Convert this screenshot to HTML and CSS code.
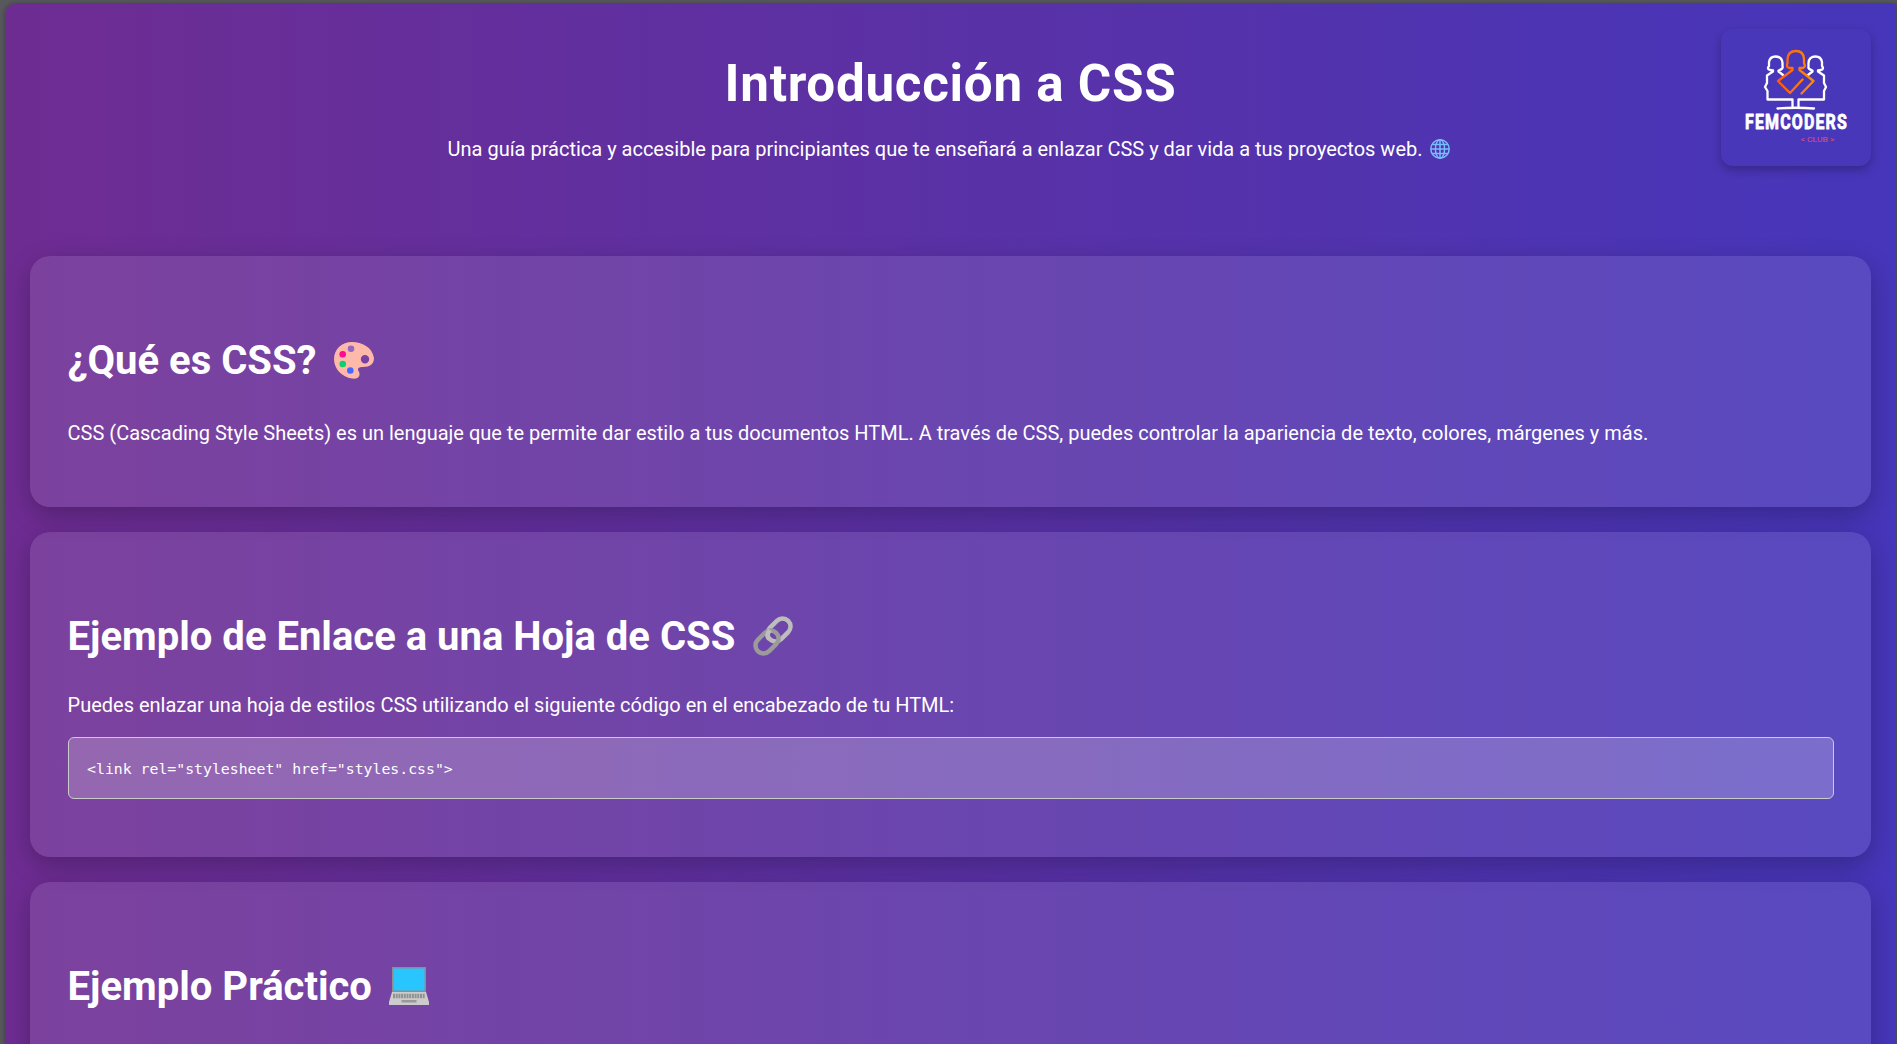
FILE: index.html
```html
<!DOCTYPE html>
<html lang="es">
<head>
<meta charset="utf-8">
<title>Introducción a CSS</title>
<link rel="stylesheet" href="styles.css">
</head>
<body>
<div class="page">
  <header class="header">
    <h1 class="title">Introducción a CSS</h1>
    <p class="lead">Una guía práctica y accesible para principiantes que te enseñará a enlazar CSS y dar vida a tus proyectos web.
      <svg class="globe" viewBox="0 0 20 20" fill="none" stroke="#78bdfb" stroke-width="1.5"><circle cx="10" cy="10" r="9.2"/><ellipse cx="10" cy="10" rx="4.6" ry="9.2"/><path d="M10 1v18M1 10h18M2.5 5.5h15M2.5 14.5h15"/></svg>
    </p>
    <div class="logo">
      <svg viewBox="0 0 150 137" fill="none" stroke-width="2.3" stroke-linejoin="round" stroke-linecap="round">
        <g stroke="#fff">
          <path d="M62 46L57.500 42.500V41.500Q62.500 40 61.500 37V34Q61 27.500 54.500 27.500Q49 27.500 48 33V37Q45.500 40 49 41L52 41.500V42.500L46 46.500V54L44 58L46.500 62V70.500H71.500V78"/>
          <path d="M87 46L91.500 42.500V41.500Q86.500 40 87.500 37V34Q88 27.500 94.500 27.500Q100 27.500 101 33V37Q103.500 40 100 41L97 41.500V42.500L103 46.500V54L105 58L103 62V70.500H77.500V78"/>
          <path d="M56.500 79.500Q75 78 93 79.500"/>
        </g>
        <path stroke="url(#flame)" d="M71.500 39H68Q65 38 66.500 34V30Q67 22 75 22Q82.500 22 83 30V34Q85 38 82 39H78.500V41L92.500 52L80.500 64.500M81.500 50.500L69 64L57 52L71.500 41V39"/>
        <defs><linearGradient id="flame" x1="57" x2="92" y1="0" y2="0" gradientUnits="userSpaceOnUse"><stop stop-color="#ff5a12"/><stop offset="1" stop-color="#ff8c00"/></linearGradient></defs>
        <text class="brand" transform="translate(24 100) scale(.76 1)" textLength="134" lengthAdjust="spacing">FEMCODERS</text>
        <text class="club" x="79.500" y="112.500" textLength="34" lengthAdjust="spacingAndGlyphs">&lt; CLUB &gt;</text>
      </svg>
    </div>
  </header>
  <main class="sections">
    <section class="card intro">
      <h2 class="heading">¿Qué es CSS?
        <svg class="icon" viewBox="0 0 40 40"><path fill="#ffb9aa" fill-rule="evenodd" d="M18 2C8 2 0 9 0 19C0 29 8 37 18 38.500C25 39.500 27 35 24.500 31C23 28 25 27 29 27C36 27 40 24 40 18C38 7 28 2 18 2ZM31 15A4.200 4.200 0 1 1 31 23.400A4.200 4.200 0 1 1 31 15Z"/><circle cx="17" cy="8.700" r="3.300" fill="#9268c4"/><circle cx="8.700" cy="14.200" r="3.300" fill="#ff0a91"/><circle cx="8.700" cy="24" r="3.300" fill="#0bd06b"/><circle cx="16.300" cy="30.500" r="3.300" fill="#4668ff"/></svg>
      </h2>
      <p class="text">CSS (Cascading Style Sheets) es un lenguaje que te permite dar estilo a tus documentos HTML. A través de CSS, puedes controlar la apariencia de texto, colores, márgenes y más.</p>
    </section>
    <section class="card link">
      <h2 class="heading">Ejemplo de Enlace a una Hoja de CSS
        <svg class="icon" viewBox="0 0 40 40" fill="none" stroke-width="4.500"><rect x="13" y="6" width="26" height="16" rx="8" transform="rotate(-45 26 14)" stroke="#bdbdbd"/><rect x="1" y="18" width="26" height="16" rx="8" transform="rotate(-45 14 26)" stroke="#9b9b9b"/><path d="M17 14L15 17Q13.500 20 16 23" stroke="#bdbdbd"/></svg>
      </h2>
      <p class="text">Puedes enlazar una hoja de estilos CSS utilizando el siguiente código en el encabezado de tu HTML:</p>
      <pre class="code"><code>&lt;link rel="stylesheet" href="styles.css"&gt;</code></pre>
    </section>
    <section class="card practice">
      <h2 class="heading">Ejemplo Práctico
        <svg class="icon" viewBox="0 0 40 40"><path fill="#8c8c96" d="M3 1h34v25H3z"/><path fill="#28c5ff" d="M4.500 2.500h31v22h-31z"/><path fill="#ccc" d="M3 26h34l3 10v3H0v-3z"/><path stroke="#929292" stroke-width="4.500" stroke-dasharray="2 .7" d="M4 30h32"/><path fill="#999" d="M12.500 34h15v2.500h-15z"/></svg>
      </h2>
    </section>
  </main>
</div>
</body>
</html>
```
FILE: styles.css
```css
* { box-sizing: border-box; }
html { background: #57585c; }
body {
  margin: 0;
  height: 1044px;
  overflow: hidden;
  padding: 4px 1px 0 5px;
  font-family: Roboto, sans-serif;
  color: #fff;
}
.page {
  position: relative;
  height: 1040px;
  overflow: hidden;
  padding: 0 25px;
  border-radius: 10px 0 0 0;
  background: linear-gradient(90deg, #6e2c92, #4636ba);
  box-shadow: 0 0 4px rgba(0, 0, 0, .35);
}
.header { height: 252px; padding-top: 50px; text-align: center; }
.title { margin: 0; font-size: 51.2px; line-height: 60px; letter-spacing: .7px; font-weight: 700; }
.lead { margin: 19px 3px 0 0; font-size: 20px; line-height: 32px; }
.globe { width: 20px; height: 20px; margin-left: 3px; vertical-align: -3px; }
.logo {
  position: absolute;
  top: 25px;
  right: 25px;
  width: 150px;
  height: 137px;
  border-radius: 12px;
  background: #4937b9;
  box-shadow: 0 4px 10px rgba(0, 0, 0, .25);
}
.logo svg { display: block; width: 150px; height: 137px; }
.brand { font: 700 21px Roboto, sans-serif; fill: #fff; stroke: #fff; stroke-width: .8px; }
.club { font: 400 8px Roboto, sans-serif; fill: #e8505c; stroke: none; }
.sections { display: grid; gap: 25px; }
.card {
  padding: 75px 37px 0 37.6px;
  border-radius: 20px;
  background: rgba(255, 255, 255, .1);
  box-shadow: 0 8px 25px rgba(0, 0, 0, .25);
}
.intro { height: 251px; }
.link { height: 325px; }
.practice { height: 330px; }
.heading { margin: 0; font-size: 40px; line-height: 60px; font-weight: 700; }
.icon { width: 40px; height: 40px; margin-left: 7.5px; vertical-align: -6px; }
.text { margin: 26px 0 0; font-size: 19.99px; line-height: 32px; }
.link .text { margin-top: 22px; }
.code {
  height: 62px;
  margin: 16px 0 0;
  padding: 19px 18.5px 0;
  border: 1px solid #ccc;
  border-radius: 6px;
  background: rgba(255, 255, 255, .2);
  font: 14.82px/24px "DejaVu Sans Mono", monospace;
}
.code code { font: inherit; }
```
